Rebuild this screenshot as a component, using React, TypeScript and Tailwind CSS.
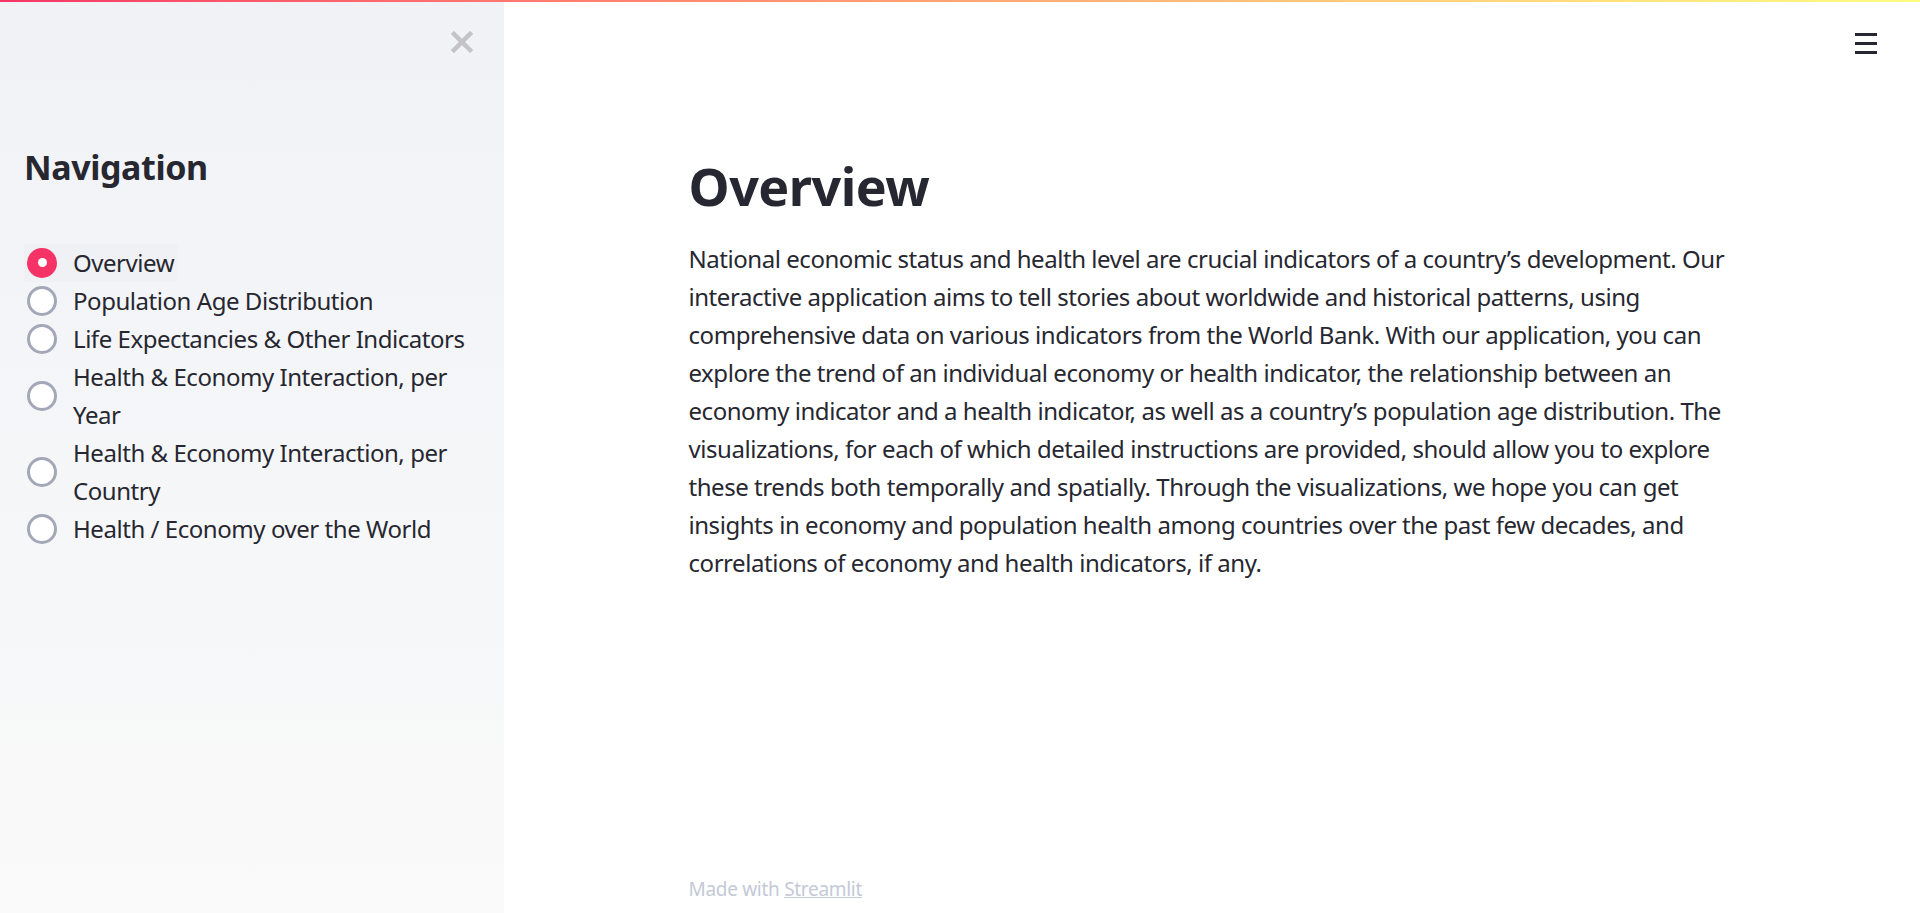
import React, { useState } from "react";

const pages = [
  "Overview",
  "Population Age Distribution",
  "Life Expectancies & Other Indicators",
  "Health & Economy Interaction, per Year",
  "Health & Economy Interaction, per Country",
  "Health / Economy over the World",
];

const App: React.FC = () => {
  const [page, setPage] = useState("Overview");

  return (
    <div className="relative flex h-screen flex-col overflow-hidden bg-white font-['Noto_Sans',sans-serif] text-[#262730]">
      <div className="h-[2px] w-full shrink-0 bg-gradient-to-r from-[#f63366] to-[#fffd80]" />
      <div className="flex min-h-0 flex-1">
        {/* sidebar */}
        <aside className="relative w-[504px] shrink-0 bg-gradient-to-b from-[#f0f2f6] to-[#fafafa] px-6 pt-[145px]">
          <button className="absolute right-[27px] top-[25px] p-1 text-[#c4c4c8]">
            <svg width="22" height="22" viewBox="0 0 22 22">
              <path d="M3 3L19 19M19 3L3 19" stroke="currentColor" strokeWidth="4.5" strokeLinecap="square" />
            </svg>
          </button>
          <h2 className="text-[34px] font-bold leading-[1.2] tracking-[-0.4px]">Navigation</h2>
          <div className="mt-[56px] flex flex-col">
            {pages.map((p) => {
              const active = p === page;
              return (
                <label
                  key={p}
                  onClick={() => setPage(p)}
                  className={`flex cursor-pointer items-center gap-4 rounded pr-1 ${active ? "w-fit bg-[#ebedf2]/50" : ""}`}
                >
                  {active ? (
                    <span className="ml-[3px] flex h-[30px] w-[30px] shrink-0 items-center justify-center rounded-full bg-[#f63366]">
                      <span className="h-[9px] w-[9px] rounded-full bg-white" />
                    </span>
                  ) : (
                    <span className="ml-[3px] h-[30px] w-[30px] shrink-0 rounded-full border-[3px] border-[#a3a8b8] bg-white" />
                  )}
                  <span className="text-[24px] leading-[38px] tracking-[-0.45px]">{p}</span>
                </label>
              );
            })}
          </div>
        </aside>

        {/* main */}
        <main className="flex min-w-0 flex-1 flex-col">
          <div className="mx-auto w-full max-w-[1095px] px-6 pt-[153px]">
            <h1 className="text-[52px] font-bold leading-[1.2] tracking-[-0.5px]">Overview</h1>
            <p className="mt-[23px] text-[24px] leading-[38px] tracking-[-0.45px]">
              National economic status and health level are crucial indicators of a country’s development. Our
              interactive application aims to tell stories about worldwide and historical patterns, using
              comprehensive data on various indicators from the World Bank. With our application, you can explore
              the trend of an individual economy or health indicator, the relationship between an economy indicator
              and a health indicator, as well as a country’s population age distribution. The visualizations, for
              each of which detailed instructions are provided, should allow you to explore these trends both
              temporally and spatially. Through the visualizations, we hope you can get insights in economy and
              population health among countries over the past few decades, and correlations of economy and health
              indicators, if any.
            </p>
          </div>
          <div className="mx-auto mt-auto w-full max-w-[1095px] px-6 pb-[8px]">
            <p className="text-[19px] leading-[32px] tracking-[-0.3px] text-[#c4c9d7]">
              Made with <a className="underline">Streamlit</a>
            </p>
          </div>
        </main>
      </div>

      <button className="absolute right-[43px] top-[33px] flex flex-col gap-[6.5px]">
        <span className="h-[2.5px] w-[22px] bg-[#262730]" />
        <span className="h-[2.5px] w-[22px] bg-[#262730]" />
        <span className="h-[2.5px] w-[22px] bg-[#262730]" />
      </button>
    </div>
  );
};

export default App;
